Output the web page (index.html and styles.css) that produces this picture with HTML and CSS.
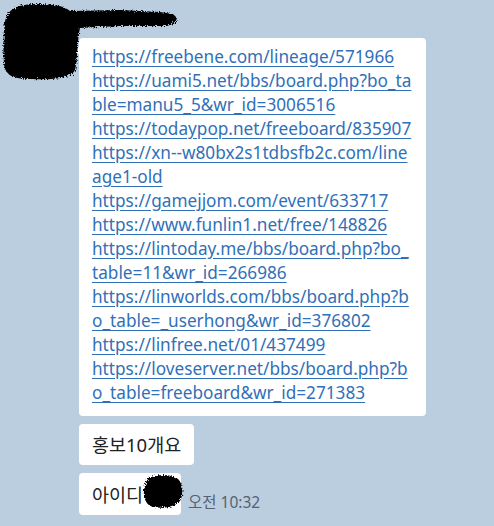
FILE: index.html
```html
<!DOCTYPE html>
<html lang="ko">
  <head>
    <meta charset="UTF-8">
    <meta name="viewport" content="width=device-width, initial-scale=1.0">
    <link rel="stylesheet" href="styles.css">
  </head>
  <body>
    <svg class="defs" width="0" height="0">
      <filter id="rough" x="-10%" y="-10%" width="120%" height="120%">
        <feTurbulence type="fractalNoise" baseFrequency="0.9" numOctaves="2" result="noise" />
        <feDisplacementMap in="SourceGraphic" in2="noise" scale="5" />
      </filter>
    </svg>
    <div class="chat">
      <div class="msgs">
        <!-- first message with the link list -->
        <div class="bubble links">
          <a href="#">https://freebene.com/lineage/571966</a>
          <a href="#">https://uami5.net/bbs/board.php?bo_ta<br>ble=manu5_5&amp;wr_id=3006516</a>
          <a href="#">https://todaypop.net/freeboard/835907</a>
          <a href="#">https://xn--w80bx2s1tdbsfb2c.com/line<br>age1-old</a>
          <a href="#">https://gamejjom.com/event/633717</a>
          <a href="#">https://www.funlin1.net/free/148826</a>
          <a href="#">https://lintoday.me/bbs/board.php?bo_<br>table=11&amp;wr_id=266986</a>
          <a href="#">https://linworlds.com/bbs/board.php?b<br>o_table=_userhong&amp;wr_id=376802</a>
          <a href="#">https://linfree.net/01/437499</a>
          <a href="#">https://loveserver.net/bbs/board.php?b<br>o_table=freeboard&amp;wr_id=271383</a>
        </div>
        <div class="bubble">홍보10개요</div>
        <div class="last">
          <div class="bubble id-bubble">
            아이디
            <svg class="scribble-small" viewBox="0 0 44 38" width="44" height="38">
              <path filter="url(#rough)" d="M8,6 C16,2 30,2 37,7 C42,12 43,22 39,29 C34,35 22,37 12,35 C5,33 2,26 3,18 C4,12 5,9 8,6 Z" />
            </svg>
          </div>
          <span class="time">오전 10:32</span>
        </div>
      </div>

      <!-- redacted profile picture and name -->
      <svg class="scribble-top" viewBox="0 0 190 90" width="190" height="90">
        <path filter="url(#rough)" d="M5,22 C7,9 18,4 38,4 C54,4 64,6 70,11 L120,10 L160,12 L173,14 L177,18 L175,23 L167,26 L120,26 L80,28 C77,40 78,58 75,70 C71,79 52,80 30,79 C13,79 5,75 4,64 C3,50 3,36 5,22 Z" />
      </svg>
    </div>
  </body>
</html>
```

FILE: styles.css
```css
body {
  margin: 0;
  background-color: #bacee0;
  font-family: "Noto Sans", "Noto Sans CJK KR", sans-serif;
}

.defs {
  position: absolute;
}

.chat {
  position: relative;
  height: 526px;
  padding-top: 38px;
  box-sizing: border-box;
}

.msgs {
  margin-left: 79px;
  display: flex;
  flex-direction: column;
  align-items: flex-start;
  gap: 8px;
}

.bubble {
  position: relative;
  background-color: white;
  border-radius: 4px;
  padding: 8px 13px;
  font-size: 18.5px;
  line-height: 25px;
  color: #222;
}

.links {
  width: 347px;
  box-sizing: border-box;
  padding: 7px 8px 11px 13px;
  line-height: 24px;
  font-size: 17.2px;
}

/* little tail on the first bubble */
.links::before {
  content: "";
  position: absolute;
  left: -5px;
  top: 9px;
  border-top: 4px solid transparent;
  border-bottom: 4px solid transparent;
  border-right: 5px solid white;
}

.links a {
  display: block;
  color: #3070b8;
  text-decoration: underline;
  text-underline-offset: 3px;
  white-space: nowrap;
}

.last {
  display: flex;
  align-items: flex-end;
}

.id-bubble {
  width: 102px;
  height: 42px;
  box-sizing: border-box;
  padding-top: 9px;
}

.time {
  margin-left: 7px;
  margin-bottom: 2px;
  font-size: 15.5px;
  color: #556270;
}

.scribble-small {
  position: absolute;
  left: 62px;
  top: -1px;
  fill: black;
}

.scribble-top {
  position: absolute;
  left: 0;
  top: 0;
  fill: black;
}
```
